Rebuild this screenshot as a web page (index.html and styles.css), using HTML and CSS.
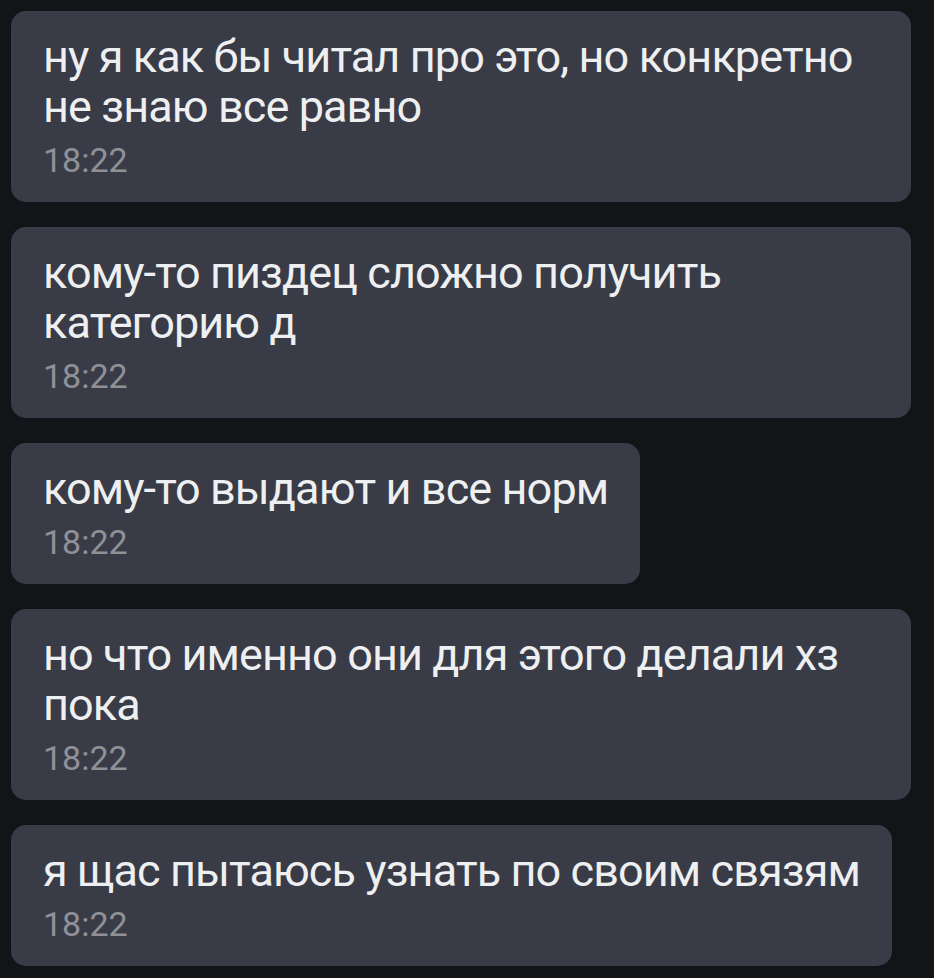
FILE: index.html
```html
<!DOCTYPE html>
<html lang="ru">
<head>
    <meta charset="utf-8"/>
    <title>Chat</title>
    <link rel="stylesheet" href="styles.css">
</head>
<body>
    <div class="chat">
        <div class="msg">
            <div class="text">ну я как бы читал про это, но конкретно не знаю все равно</div>
            <div class="time">18:22</div>
        </div>
        <div class="msg">
            <div class="text">кому-то пиздец сложно получить категорию д</div>
            <div class="time">18:22</div>
        </div>
        <div class="msg">
            <div class="text">кому-то выдают и все норм</div>
            <div class="time">18:22</div>
        </div>
        <div class="msg">
            <div class="text">но что именно они для этого делали хз пока</div>
            <div class="time">18:22</div>
        </div>
        <div class="msg">
            <div class="text">я щас пытаюсь узнать по своим связям</div>
            <div class="time">18:22</div>
        </div>
    </div>
</body>
</html>
```

FILE: styles.css
```css
html, body {
    margin: 0;
    padding: 0;
    background-color: #121418;
    font-family: Roboto, "Noto Sans", sans-serif;
    color: #eeeff1;
}
.chat {
    display: flex;
    flex-direction: column;
    align-items: flex-start;
    gap: 25px;
    padding: 11px;
}
.msg {
    max-width: 900px;
    box-sizing: border-box;
    padding: 21px 32px 22px;
    background-color: #393c46;
    border-radius: 15px;
}
.text {
    font-size: 45px;
    line-height: 50px;
    letter-spacing: -0.9px;
}
.time {
    margin-top: 8px;
    font-size: 34px;
    line-height: 40px;
    color: #8f9197;
}
```
